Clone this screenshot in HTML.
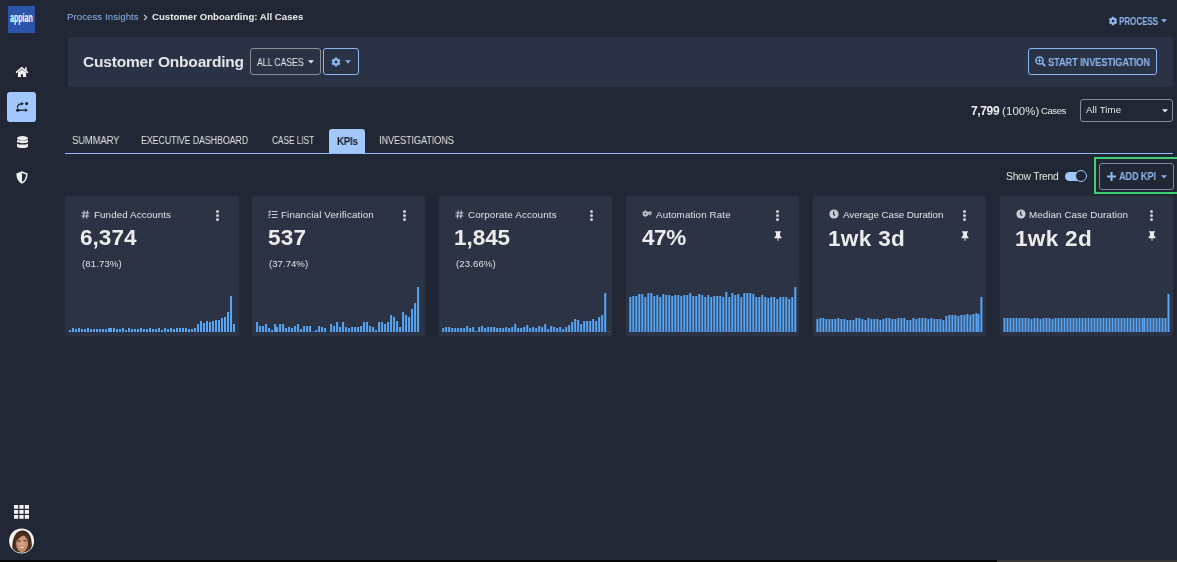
<!DOCTYPE html>
<html><head><meta charset="utf-8">
<style>
*{box-sizing:border-box;margin:0;padding:0}
html,body{width:1177px;height:562px;overflow:hidden;background:#212734;font-family:"Liberation Sans",sans-serif;color:#e8e8e8}
.abs{position:absolute}
.t{position:absolute;white-space:nowrap;line-height:1;will-change:transform}
#botbar{position:absolute;left:0;top:559.6px;width:997px;height:2.4px;background:#060709}
#botbar2{position:absolute;left:997px;top:559.6px;width:180px;height:2.4px;background:#383735}
/* sidebar */
.logo{position:absolute;left:8px;top:6px;width:27px;height:27px;background:#2c55a9}
.logo span{position:absolute;display:block;left:2px;top:5.5px;font-size:12px;color:#fff;font-weight:bold;line-height:12px;transform:scaleX(0.59);transform-origin:0 0;white-space:nowrap}
.navact{position:absolute;left:7px;top:92px;width:29px;height:30px;background:#a1c7fc;border-radius:3px}
/* header panel */
.panel{position:absolute;left:68px;top:37px;width:1105px;height:50px;background:#2a3345;border-radius:2px}
.btn{position:absolute;border:1px solid #8a8d93;border-radius:3px;background:transparent}
.btnb{border-color:#8db7f2}
/* tabs */
.tabline{position:absolute;left:65px;top:153px;width:1108px;height:1px;background:#93bdf6}
.tabact{position:absolute;left:329px;top:129px;width:36px;height:25px;background:#a2c7fb;border-radius:3px 3px 0 0}
.tab{position:absolute;top:136px;font-size:10px;color:#e3e3e3;line-height:1;white-space:nowrap}
/* cards */
.card{position:absolute;top:196px;width:173.6px;height:140px;background:#2b3345;border-radius:3px;box-shadow:0 0 2px rgba(60,70,90,0.5)}
.card .ct{position:absolute;left:16px;top:13px;height:10px;white-space:nowrap;font-size:10px;line-height:10px;color:#e2e2e4}
.card .ct svg{position:absolute;left:0;top:0}
.card .ct span{position:absolute;left:14px;top:1px}
.card .dots{position:absolute;right:19.8px;top:13.8px;width:3px;height:10px}
.card .dots i{display:block;width:3px;height:3px;border-radius:50%;background:#cfd1d5;margin-bottom:1px}
.card .pin{position:absolute;right:17.5px;top:35px}
.card .val{position:absolute;left:15.6px;top:30px;font-size:22px;line-height:22px;font-weight:bold;color:#ececec;white-space:nowrap}
.card .pct{position:absolute;left:18px;top:63px;font-size:10px;line-height:10px;color:#e0e0e0;white-space:nowrap}
.card .chart{position:absolute;left:0;top:0}
</style></head><body>
<!-- sidebar -->
<div class="logo"><span>appian</span></div>
<svg class="abs" style="left:12px;top:63px" width="20" height="18" viewBox="0 0 20 18"><g fill="#f0f0f0"><path d="M4.6 9.2 L9.9 4.9 L15.4 9.3" stroke="#f0f0f0" stroke-width="1.7" fill="none" stroke-linecap="round"/><rect x="13.2" y="4.2" width="1.5" height="3.2"/><path d="M5.9 14 V9.6 L9.9 6.6 L14.1 9.6 V14 H11 V11.3 H9 V14 Z"/></g></svg>
<div class="navact"></div>
<svg class="abs" style="left:12px;top:98px" width="20" height="18" viewBox="0 0 20 18"><g fill="#181d28"><circle cx="14.6" cy="5.5" r="1.5"/><circle cx="5.8" cy="12.2" r="1.6"/><path d="M9.2 4 L11.9 5.8 L9.2 7.6 Z"/><path d="M13.1 10.3 L15.9 12.2 L13.1 14.1 Z"/></g><g stroke="#181d28" stroke-width="1.3" fill="none"><path d="M5.4 9.7 C5.4 7 6.8 5.8 9.6 5.8"/><path d="M6 12.2 H13.6"/></g></svg>
<svg class="abs" style="left:17px;top:136px" width="11" height="13" viewBox="0 0 11 13"><g fill="#eeeeee"><ellipse cx="5.5" cy="2.2" rx="5.5" ry="2.2"/><path d="M0 3.4 C1 5 10 5 11 3.4 V6 C10 7.6 1 7.6 0 6Z"/><path d="M0 7.4 C1 9 10 9 11 7.4 V10.6 C10 12.6 1 12.6 0 10.6Z"/></g></svg>
<svg class="abs" style="left:16px;top:171px" width="12" height="13" viewBox="0 0 12 13"><path d="M6 0.3 L11.6 2.4 C11.6 7 10 10.6 6 12.7 C2 10.6 0.4 7 0.4 2.4 Z" fill="#eeeeee"/><path d="M6 2 L10 3.5 C9.9 7 8.6 9.6 6 11.1 Z" fill="#212734"/></svg>
<svg class="abs" style="left:14px;top:505px" width="15" height="14" viewBox="0 0 15 14"><g fill="#f2f2f2"><rect x="0" y="0" width="4.2" height="3.8"/><rect x="5.4" y="0" width="4.2" height="3.8"/><rect x="10.8" y="0" width="4.2" height="3.8"/><rect x="0" y="5" width="4.2" height="3.8"/><rect x="5.4" y="5" width="4.2" height="3.8"/><rect x="10.8" y="5" width="4.2" height="3.8"/><rect x="0" y="10" width="4.2" height="3.8"/><rect x="5.4" y="10" width="4.2" height="3.8"/><rect x="10.8" y="10" width="4.2" height="3.8"/></g></svg>
<svg class="abs" style="left:6px;top:526px" width="32" height="30" viewBox="0 0 599 562"><defs><clipPath id="av"><circle cx="292" cy="280" r="218"/></clipPath><radialGradient id="sk" cx="0.5" cy="0.45" r="0.6"><stop offset="0" stop-color="#dba585"/><stop offset="1" stop-color="#b98160"/></radialGradient></defs><circle cx="292" cy="280" r="234" fill="#f2f2f2"/><g clip-path="url(#av)"><rect width="599" height="562" fill="#f4f2ef"/><path d="M120 520 C110 380 120 250 170 170 C210 105 260 85 300 85 C370 85 430 120 460 200 C490 280 480 400 490 520 Z" fill="#3f2819"/><path d="M170 200 C200 120 380 110 430 190 C440 260 450 380 440 520 L380 520 C400 420 410 300 390 220 C330 180 250 200 200 260 C190 330 200 430 210 520 L160 520 C150 400 150 300 170 200Z" fill="#4f3220"/><ellipse cx="300" cy="330" rx="112" ry="160" fill="url(#sk)"/><path d="M190 250 C220 160 300 140 380 160 C340 170 260 190 200 280Z" fill="#3f2819"/><ellipse cx="245" cy="280" rx="38" ry="14" fill="#6a4536"/><ellipse cx="352" cy="278" rx="36" ry="14" fill="#6a4536"/><ellipse cx="296" cy="405" rx="52" ry="22" fill="#b8685a"/><ellipse cx="296" cy="402" rx="40" ry="13" fill="#f3e4de"/></g></svg>
<div id="botbar"></div><div id="botbar2"></div>

<!-- breadcrumb -->
<svg class="abs" style="left:143px;top:14px" width="5" height="7" viewBox="0 0 5 7"><path d="M1 0.8 L3.8 3.5 L1 6.2" stroke="#cfd2d6" stroke-width="1.1" fill="none"/></svg>
<!-- process -->
<svg class="abs" style="left:1107.5px;top:16.1px" width="10" height="10" viewBox="0 0 10 10"><path fill="#8db6ef" fill-rule="evenodd" d="M3.73 1.85 L3.96 0.83 L6.04 0.83 L6.27 1.85 L7.09 2.32 L8.09 2.01 L9.13 3.81 L8.37 4.53 L8.37 5.47 L9.13 6.19 L8.09 7.99 L7.09 7.68 L6.27 8.15 L6.04 9.17 L3.96 9.17 L3.73 8.15 L2.91 7.68 L1.91 7.99 L0.87 6.19 L1.63 5.47 L1.63 4.53 L0.87 3.81 L1.91 2.01 L2.91 2.32Z M6.30 5.00 A1.3 1.3 0 1 0 3.70 5.00 A1.3 1.3 0 1 0 6.30 5.00Z"/></svg>
<svg class="abs" style="left:1161px;top:19px" width="6" height="4" viewBox="0 0 6 4"><path d="M0 0.3 H6 L3 3.6Z" fill="#8db6ef"/></svg>

<!-- header panel -->
<div class="panel"></div>
<div class="btn" style="left:250px;top:48px;width:71px;height:27px"></div>
<svg class="abs" style="left:308px;top:60px" width="6" height="4" viewBox="0 0 6 4"><path d="M0 0.3 H6 L3 3.6Z" fill="#e6e6e6"/></svg>
<div class="btn btnb" style="left:323px;top:48px;width:36px;height:27px"></div>
<svg class="abs" style="left:331px;top:57px" width="10" height="10" viewBox="0 0 10 10"><path fill="#8db6ef" fill-rule="evenodd" d="M3.65 1.66 L3.89 0.54 L6.11 0.54 L6.35 1.66 L7.22 2.16 L8.31 1.80 L9.42 3.73 L8.56 4.50 L8.56 5.50 L9.42 6.27 L8.31 8.20 L7.22 7.84 L6.35 8.34 L6.11 9.46 L3.89 9.46 L3.65 8.34 L2.78 7.84 L1.69 8.20 L0.58 6.27 L1.44 5.50 L1.44 4.50 L0.58 3.73 L1.69 1.80 L2.78 2.16Z M6.40 5.00 A1.4 1.4 0 1 0 3.60 5.00 A1.4 1.4 0 1 0 6.40 5.00Z"/></svg>
<svg class="abs" style="left:344.5px;top:60px" width="6" height="4" viewBox="0 0 6 4"><path d="M0 0.3 H6 L3 3.6Z" fill="#8db6ef"/></svg>
<div class="btn btnb" style="left:1028px;top:48px;width:129px;height:27px"></div>
<svg class="abs" style="left:1035px;top:56px" width="11" height="11" viewBox="0 0 11 11"><circle cx="4.5" cy="4.5" r="3.6" stroke="#8db6ef" stroke-width="1.5" fill="none"/><path d="M7 7 L10.2 10.2" stroke="#8db6ef" stroke-width="1.8"/><path d="M4.5 2.6 V6.4 M2.6 4.5 H6.4" stroke="#8db6ef" stroke-width="1.1"/></svg>

<!-- cases -->
<div class="btn" style="left:1080px;top:99px;width:93px;height:23px;background:#212734"></div>
<svg class="abs" style="left:1162px;top:109px" width="6" height="4" viewBox="0 0 6 4"><path d="M0 0.3 H6 L3 3.6Z" fill="#e6e6e6"/></svg>

<!-- tabs -->
<div class="tabact"></div>
<div class="tabline"></div>

<!-- toolbar -->
<div class="abs" style="left:1065px;top:171.5px;width:20px;height:9px;border-radius:4.5px;background:#a1c7fc"></div>
<div class="abs" style="left:1075px;top:169.8px;width:12px;height:12px;border-radius:50%;background:#212734;border:1.6px solid #a1c7fc"></div>
<div class="abs" style="left:1094px;top:157px;width:90px;height:37px;border:2px solid #3fcf70"></div>
<div class="btn" style="left:1099px;top:163px;width:75px;height:27px;border-color:#7d8aa3;background:#212734"></div>
<svg class="abs" style="left:1107px;top:172px" width="9" height="9" viewBox="0 0 9 9"><path d="M4.5 0 V9 M0 4.5 H9" stroke="#8db6ef" stroke-width="2.1"/></svg>
<svg class="abs" style="left:1160.5px;top:175px" width="6" height="4" viewBox="0 0 6 4"><path d="M0 0.3 H6 L3 3.6Z" fill="#8db6ef"/></svg>

<div class="card" style="left:65.00px">
  <div class="ct"><svg class="ci" style="top:1px" width="9" height="9" viewBox="0 0 9 9"><g stroke="#c9ccd2" stroke-width="1.1" fill="none"><path d="M3.2 0.5 L2.4 8.5 M6.4 0.5 L5.6 8.5 M0.6 3 H8.4 M0.4 6 H8.2"/></g></svg></div>
  <div class="dots"><i></i><i></i><i></i></div>

  <svg class="chart" width="173.6" height="140" viewBox="0 0 173.6 140"><g fill="#58a6f3"><rect x="4.00" y="134" width="2" height="2"/><rect x="7.00" y="132" width="2" height="4"/><rect x="10.00" y="133" width="2" height="3"/><rect x="13.00" y="132" width="2" height="4"/><rect x="16.00" y="133" width="2" height="3"/><rect x="19.00" y="133" width="2" height="3"/><rect x="22.00" y="132" width="2" height="4"/><rect x="25.00" y="133" width="2" height="3"/><rect x="28.00" y="133" width="2" height="3"/><rect x="31.00" y="133" width="2" height="3"/><rect x="34.00" y="133" width="2" height="3"/><rect x="37.00" y="133" width="2" height="3"/><rect x="40.00" y="133" width="2" height="3"/><rect x="43.00" y="132" width="2" height="4"/><rect x="45.00" y="132" width="2" height="4"/><rect x="48.00" y="132" width="2" height="4"/><rect x="51.00" y="133" width="2" height="3"/><rect x="54.00" y="133" width="2" height="3"/><rect x="57.00" y="132" width="2" height="4"/><rect x="60.00" y="134" width="2" height="2"/><rect x="63.00" y="132" width="2" height="4"/><rect x="66.00" y="133" width="2" height="3"/><rect x="69.00" y="133" width="2" height="3"/><rect x="72.00" y="133" width="2" height="3"/><rect x="75.00" y="132" width="2" height="4"/><rect x="78.00" y="133" width="2" height="3"/><rect x="81.00" y="133" width="2" height="3"/><rect x="84.00" y="132" width="2" height="4"/><rect x="87.00" y="133" width="2" height="3"/><rect x="90.00" y="133" width="2" height="3"/><rect x="93.00" y="132" width="2" height="4"/><rect x="96.00" y="134" width="2" height="2"/><rect x="99.00" y="132" width="2" height="4"/><rect x="102.00" y="133" width="2" height="3"/><rect x="105.00" y="132" width="2" height="4"/><rect x="108.00" y="133" width="2" height="3"/><rect x="111.00" y="132" width="2" height="4"/><rect x="114.00" y="132" width="2" height="4"/><rect x="117.00" y="132" width="2" height="4"/><rect x="120.00" y="132" width="2" height="4"/><rect x="123.00" y="133" width="2" height="3"/><rect x="126.00" y="133" width="2" height="3"/><rect x="129.00" y="132" width="2" height="4"/><rect x="132.00" y="128" width="2" height="8"/><rect x="135.00" y="125" width="2" height="11"/><rect x="138.00" y="127" width="2" height="9"/><rect x="141.00" y="125" width="2" height="11"/><rect x="144.00" y="126" width="2" height="10"/><rect x="147.00" y="125" width="2" height="11"/><rect x="150.00" y="124" width="2" height="12"/><rect x="153.00" y="124" width="2" height="12"/><rect x="156.00" y="122" width="2" height="14"/><rect x="159.00" y="121" width="2" height="15"/><rect x="162.00" y="116" width="2" height="20"/><rect x="165.00" y="100" width="2" height="36"/><rect x="168.00" y="128" width="2" height="8"/></g></svg>
</div>
<div class="card" style="left:251.90px">
  <div class="ct"><svg class="ci" style="top:1px" width="10" height="9" viewBox="0 0 10 9"><g stroke="#c9ccd2" stroke-width="1.1" fill="none"><path d="M0.5 1.5 L1.3 2.3 L2.6 0.6 M0.5 4.5 L1.3 5.3 L2.6 3.6 M3.8 1.5 H9.5 M3.8 4.5 H9.5 M3.8 7.5 H9.5"/><rect x="0.6" y="6.9" width="1.4" height="1.2" fill="#c9ccd2" stroke="none"/></g></svg></div>
  <div class="dots"><i></i><i></i><i></i></div>

  <svg class="chart" width="173.6" height="140" viewBox="0 0 173.6 140"><g fill="#58a6f3"><rect x="4.10" y="126" width="2" height="10"/><rect x="7.10" y="130" width="2" height="6"/><rect x="10.10" y="130" width="2" height="6"/><rect x="13.10" y="128" width="2" height="8"/><rect x="16.10" y="132" width="2" height="4"/><rect x="19.10" y="134" width="2" height="2"/><rect x="22.10" y="128" width="2" height="8"/><rect x="24.10" y="131" width="2" height="5"/><rect x="27.10" y="128" width="2" height="8"/><rect x="30.10" y="128" width="2" height="8"/><rect x="33.10" y="132" width="2" height="4"/><rect x="36.10" y="131" width="2" height="5"/><rect x="39.10" y="132" width="2" height="4"/><rect x="42.10" y="130" width="2" height="6"/><rect x="45.10" y="128" width="2" height="8"/><rect x="48.10" y="133" width="2" height="3"/><rect x="51.10" y="130" width="2" height="6"/><rect x="54.10" y="130" width="2" height="6"/><rect x="57.10" y="130" width="2" height="6"/><rect x="60.10" y="135" width="3" height="1" opacity="0.35"/><rect x="63.10" y="134" width="2" height="2"/><rect x="66.10" y="130" width="2" height="6"/><rect x="69.10" y="131" width="2" height="5"/><rect x="72.10" y="132" width="2" height="4"/><rect x="78.10" y="128" width="2" height="8"/><rect x="81.10" y="130" width="2" height="6"/><rect x="84.10" y="126" width="2" height="10"/><rect x="87.10" y="131" width="2" height="5"/><rect x="90.10" y="126" width="2" height="10"/><rect x="93.10" y="131" width="2" height="5"/><rect x="96.10" y="132" width="2" height="4"/><rect x="99.10" y="131" width="2" height="5"/><rect x="102.10" y="131" width="2" height="5"/><rect x="105.10" y="131" width="2" height="5"/><rect x="108.10" y="130" width="2" height="6"/><rect x="111.10" y="126" width="2" height="10"/><rect x="114.10" y="126" width="2" height="10"/><rect x="117.10" y="130" width="2" height="6"/><rect x="120.10" y="131" width="2" height="5"/><rect x="123.10" y="134" width="2" height="2"/><rect x="126.10" y="126" width="2" height="10"/><rect x="129.10" y="126" width="2" height="10"/><rect x="132.10" y="128" width="2" height="8"/><rect x="135.10" y="126" width="2" height="10"/><rect x="138.10" y="119" width="2" height="17"/><rect x="141.10" y="121" width="2" height="15"/><rect x="144.10" y="125" width="2" height="11"/><rect x="147.10" y="131" width="2" height="5"/><rect x="150.10" y="116" width="2" height="20"/><rect x="153.10" y="119" width="2" height="17"/><rect x="156.10" y="121" width="2" height="15"/><rect x="159.10" y="113" width="2" height="23"/><rect x="162.10" y="107" width="2" height="29"/><rect x="165.10" y="91" width="2" height="45"/></g></svg>
</div>
<div class="card" style="left:438.80px">
  <div class="ct"><svg class="ci" style="top:1px" width="9" height="9" viewBox="0 0 9 9"><g stroke="#c9ccd2" stroke-width="1.1" fill="none"><path d="M3.2 0.5 L2.4 8.5 M6.4 0.5 L5.6 8.5 M0.6 3 H8.4 M0.4 6 H8.2"/></g></svg></div>
  <div class="dots"><i></i><i></i><i></i></div>

  <svg class="chart" width="173.6" height="140" viewBox="0 0 173.6 140"><g fill="#58a6f3"><rect x="3.20" y="132" width="2" height="4"/><rect x="6.20" y="131" width="2" height="5"/><rect x="9.20" y="131" width="2" height="5"/><rect x="12.20" y="132" width="2" height="4"/><rect x="15.20" y="132" width="2" height="4"/><rect x="18.20" y="132" width="2" height="4"/><rect x="21.20" y="132" width="2" height="4"/><rect x="24.20" y="132" width="2" height="4"/><rect x="27.20" y="130" width="2" height="6"/><rect x="30.20" y="132" width="2" height="4"/><rect x="33.20" y="131" width="2" height="5"/><rect x="36.20" y="135" width="2" height="1"/><rect x="39.20" y="131" width="2" height="5"/><rect x="42.20" y="130" width="2" height="6"/><rect x="45.20" y="132" width="2" height="4"/><rect x="48.20" y="131" width="2" height="5"/><rect x="51.20" y="131" width="2" height="5"/><rect x="54.20" y="131" width="2" height="5"/><rect x="57.20" y="132" width="2" height="4"/><rect x="60.20" y="132" width="2" height="4"/><rect x="63.20" y="132" width="2" height="4"/><rect x="66.20" y="131" width="2" height="5"/><rect x="69.20" y="132" width="2" height="4"/><rect x="72.20" y="131" width="2" height="5"/><rect x="75.20" y="128" width="2" height="8"/><rect x="78.20" y="132" width="2" height="4"/><rect x="81.20" y="132" width="2" height="4"/><rect x="84.20" y="131" width="2" height="5"/><rect x="87.20" y="129" width="2" height="7"/><rect x="90.20" y="132" width="2" height="4"/><rect x="93.20" y="131" width="2" height="5"/><rect x="96.20" y="132" width="2" height="4"/><rect x="99.20" y="130" width="2" height="6"/><rect x="102.20" y="131" width="2" height="5"/><rect x="105.20" y="128" width="2" height="8"/><rect x="108.20" y="133" width="2" height="3"/><rect x="111.20" y="130" width="2" height="6"/><rect x="114.20" y="131" width="2" height="5"/><rect x="117.20" y="132" width="2" height="4"/><rect x="120.20" y="131" width="2" height="5"/><rect x="123.20" y="133" width="2" height="3"/><rect x="126.20" y="131" width="2" height="5"/><rect x="129.20" y="129" width="2" height="7"/><rect x="132.20" y="126" width="2" height="10"/><rect x="135.20" y="123" width="2" height="13"/><rect x="138.20" y="124" width="2" height="12"/><rect x="141.20" y="128" width="2" height="8"/><rect x="144.20" y="125" width="2" height="11"/><rect x="147.20" y="125" width="2" height="11"/><rect x="150.20" y="125" width="2" height="11"/><rect x="153.20" y="123" width="2" height="13"/><rect x="156.20" y="125" width="2" height="11"/><rect x="159.20" y="121" width="2" height="15"/><rect x="162.20" y="119" width="2" height="17"/><rect x="165.20" y="97" width="2" height="39"/><rect x="168.20" y="135" width="3" height="1" opacity="0.35"/></g></svg>
</div>
<div class="card" style="left:625.70px">
  <div class="ct"><svg class="ci" style="top:0px" width="10" height="9" viewBox="0 0 11 10"><path fill="#c9ccd2" fill-rule="evenodd" d="M2.60 2.73 L2.85 1.80 L4.55 1.80 L4.80 2.73 L5.29 3.02 L6.22 2.77 L7.06 4.24 L6.39 4.92 L6.39 5.48 L7.06 6.16 L6.22 7.63 L5.29 7.38 L4.80 7.67 L4.55 8.60 L2.85 8.60 L2.60 7.67 L2.11 7.38 L1.18 7.63 L0.34 6.16 L1.01 5.48 L1.01 4.92 L0.34 4.24 L1.18 2.77 L2.11 3.02Z M4.70 5.20 A1.0 1.0 0 1 0 2.70 5.20 A1.0 1.0 0 1 0 4.70 5.20Z"/><path fill="#c9ccd2" fill-rule="evenodd" d="M7.85 3.07 L8.00 2.38 L9.20 2.38 L9.35 3.07 L9.55 3.19 L10.23 2.97 L10.82 4.00 L10.30 4.48 L10.30 4.72 L10.82 5.20 L10.23 6.23 L9.55 6.01 L9.35 6.13 L9.20 6.82 L8.00 6.82 L7.85 6.13 L7.65 6.01 L6.97 6.23 L6.38 5.20 L6.90 4.72 L6.90 4.48 L6.38 4.00 L6.97 2.97 L7.65 3.19Z M9.35 4.60 A0.75 0.75 0 1 0 7.85 4.60 A0.75 0.75 0 1 0 9.35 4.60Z"/></svg></div>
  <div class="dots"><i></i><i></i><i></i></div><svg class="pin" width="8" height="10" viewBox="0 0 8 10"><path d="M1 0.3 H7 V1.2 L6 1.8 V4.5 L7.6 6.6 V7.2 H4.5 V9.8 H3.5 V7.2 H0.4 V6.6 L2 4.5 V1.8 L1 1.2 Z" fill="#e9e9ea"/></svg>

  <svg class="chart" width="173.6" height="140" viewBox="0 0 173.6 140"><g fill="#58a6f3"><rect x="3.30" y="101" width="2" height="35"/><rect x="6.30" y="100" width="2" height="36"/><rect x="9.30" y="100" width="2" height="36"/><rect x="12.30" y="98" width="2" height="38"/><rect x="15.30" y="98" width="2" height="38"/><rect x="18.30" y="101" width="2" height="35"/><rect x="21.30" y="97" width="2" height="39"/><rect x="24.30" y="97" width="2" height="39"/><rect x="27.30" y="100" width="2" height="36"/><rect x="30.30" y="99" width="2" height="37"/><rect x="33.30" y="101" width="2" height="35"/><rect x="36.30" y="98" width="2" height="38"/><rect x="39.30" y="99" width="2" height="37"/><rect x="42.30" y="99" width="2" height="37"/><rect x="45.30" y="100" width="2" height="36"/><rect x="48.30" y="99" width="2" height="37"/><rect x="51.30" y="99" width="2" height="37"/><rect x="54.30" y="100" width="2" height="36"/><rect x="57.30" y="99" width="2" height="37"/><rect x="60.30" y="99" width="2" height="37"/><rect x="63.30" y="97" width="2" height="39"/><rect x="66.30" y="100" width="2" height="36"/><rect x="69.30" y="100" width="2" height="36"/><rect x="72.30" y="98" width="2" height="38"/><rect x="75.30" y="99" width="2" height="37"/><rect x="78.30" y="101" width="2" height="35"/><rect x="81.30" y="99" width="2" height="37"/><rect x="84.30" y="101" width="2" height="35"/><rect x="87.30" y="100" width="2" height="36"/><rect x="90.30" y="100" width="2" height="36"/><rect x="93.30" y="100" width="2" height="36"/><rect x="96.30" y="101" width="2" height="35"/><rect x="99.30" y="96" width="2" height="40"/><rect x="102.30" y="101" width="2" height="35"/><rect x="105.30" y="97" width="2" height="39"/><rect x="108.30" y="99" width="2" height="37"/><rect x="111.30" y="98" width="2" height="38"/><rect x="114.30" y="101" width="2" height="35"/><rect x="117.30" y="97" width="2" height="39"/><rect x="120.30" y="97" width="2" height="39"/><rect x="123.30" y="97" width="2" height="39"/><rect x="126.30" y="98" width="2" height="38"/><rect x="129.30" y="101" width="2" height="35"/><rect x="132.30" y="101" width="2" height="35"/><rect x="135.30" y="99" width="2" height="37"/><rect x="138.30" y="101" width="2" height="35"/><rect x="141.30" y="102" width="2" height="34"/><rect x="144.30" y="101" width="2" height="35"/><rect x="147.30" y="101" width="2" height="35"/><rect x="150.30" y="103" width="2" height="33"/><rect x="153.30" y="101" width="2" height="35"/><rect x="156.30" y="101" width="2" height="35"/><rect x="159.30" y="101" width="2" height="35"/><rect x="162.30" y="103" width="2" height="33"/><rect x="165.30" y="101" width="2" height="35"/><rect x="168.30" y="91" width="2" height="45"/></g></svg>
</div>
<div class="card" style="left:812.60px">
  <div class="ct"><svg class="ci" width="10" height="10" viewBox="0 0 10 10"><circle cx="5" cy="5" r="4.6" fill="#c9ccd2"/><path d="M4.6 2.2 V5.4 L6.2 6.6" stroke="#2b3344" stroke-width="1.2" fill="none"/></svg></div>
  <div class="dots"><i></i><i></i><i></i></div><svg class="pin" width="8" height="10" viewBox="0 0 8 10"><path d="M1 0.3 H7 V1.2 L6 1.8 V4.5 L7.6 6.6 V7.2 H4.5 V9.8 H3.5 V7.2 H0.4 V6.6 L2 4.5 V1.8 L1 1.2 Z" fill="#e9e9ea"/></svg>

  <svg class="chart" width="173.6" height="140" viewBox="0 0 173.6 140"><g fill="#58a6f3"><rect x="3.40" y="123" width="2" height="13"/><rect x="6.40" y="122" width="2" height="14"/><rect x="9.40" y="122" width="2" height="14"/><rect x="12.40" y="123" width="2" height="13"/><rect x="15.40" y="123" width="2" height="13"/><rect x="18.40" y="123" width="2" height="13"/><rect x="21.40" y="123" width="2" height="13"/><rect x="24.40" y="122" width="2" height="14"/><rect x="27.40" y="123" width="2" height="13"/><rect x="30.40" y="123" width="2" height="13"/><rect x="33.40" y="124" width="2" height="12"/><rect x="36.40" y="124" width="2" height="12"/><rect x="39.40" y="124" width="2" height="12"/><rect x="42.40" y="122" width="2" height="14"/><rect x="45.40" y="122" width="2" height="14"/><rect x="48.40" y="123" width="2" height="13"/><rect x="51.40" y="124" width="2" height="12"/><rect x="54.40" y="122" width="2" height="14"/><rect x="57.40" y="123" width="2" height="13"/><rect x="60.40" y="123" width="2" height="13"/><rect x="63.40" y="123" width="2" height="13"/><rect x="66.40" y="124" width="2" height="12"/><rect x="69.40" y="123" width="2" height="13"/><rect x="72.40" y="122" width="2" height="14"/><rect x="75.40" y="122" width="2" height="14"/><rect x="78.40" y="123" width="2" height="13"/><rect x="81.40" y="123" width="2" height="13"/><rect x="84.40" y="122" width="2" height="14"/><rect x="87.40" y="122" width="2" height="14"/><rect x="90.40" y="122" width="2" height="14"/><rect x="93.40" y="124" width="2" height="12"/><rect x="96.40" y="124" width="2" height="12"/><rect x="99.40" y="122" width="2" height="14"/><rect x="102.40" y="123" width="2" height="13"/><rect x="105.40" y="122" width="2" height="14"/><rect x="108.40" y="122" width="2" height="14"/><rect x="111.40" y="122" width="2" height="14"/><rect x="114.40" y="123" width="2" height="13"/><rect x="117.40" y="122" width="2" height="14"/><rect x="120.40" y="123" width="2" height="13"/><rect x="123.40" y="123" width="2" height="13"/><rect x="126.40" y="123" width="2" height="13"/><rect x="129.40" y="124" width="2" height="12"/><rect x="132.40" y="120" width="2" height="16"/><rect x="135.40" y="119" width="2" height="17"/><rect x="138.40" y="119" width="2" height="17"/><rect x="141.40" y="119" width="2" height="17"/><rect x="144.40" y="120" width="2" height="16"/><rect x="147.40" y="119" width="2" height="17"/><rect x="150.40" y="119" width="2" height="17"/><rect x="153.40" y="118" width="2" height="18"/><rect x="156.40" y="119" width="2" height="17"/><rect x="159.40" y="118" width="2" height="18"/><rect x="162.40" y="117" width="2" height="19"/><rect x="164.40" y="118" width="2" height="18"/><rect x="167.40" y="101" width="2" height="35"/></g></svg>
</div>
<div class="card" style="left:999.50px">
  <div class="ct"><svg class="ci" width="10" height="10" viewBox="0 0 10 10"><circle cx="5" cy="5" r="4.6" fill="#c9ccd2"/><path d="M4.6 2.2 V5.4 L6.2 6.6" stroke="#2b3344" stroke-width="1.2" fill="none"/></svg></div>
  <div class="dots"><i></i><i></i><i></i></div><svg class="pin" width="8" height="10" viewBox="0 0 8 10"><path d="M1 0.3 H7 V1.2 L6 1.8 V4.5 L7.6 6.6 V7.2 H4.5 V9.8 H3.5 V7.2 H0.4 V6.6 L2 4.5 V1.8 L1 1.2 Z" fill="#e9e9ea"/></svg>

  <svg class="chart" width="173.6" height="140" viewBox="0 0 173.6 140"><g fill="#58a6f3"><rect x="3.50" y="122" width="2" height="14"/><rect x="6.50" y="122" width="2" height="14"/><rect x="9.50" y="122" width="2" height="14"/><rect x="12.50" y="122" width="2" height="14"/><rect x="15.50" y="122" width="2" height="14"/><rect x="18.50" y="122" width="2" height="14"/><rect x="21.50" y="122" width="2" height="14"/><rect x="24.50" y="122" width="2" height="14"/><rect x="27.50" y="122" width="2" height="14"/><rect x="30.50" y="123" width="2" height="13"/><rect x="33.50" y="122" width="2" height="14"/><rect x="36.50" y="122" width="2" height="14"/><rect x="39.50" y="123" width="2" height="13"/><rect x="42.50" y="122" width="2" height="14"/><rect x="45.50" y="122" width="2" height="14"/><rect x="48.50" y="122" width="2" height="14"/><rect x="51.50" y="123" width="2" height="13"/><rect x="54.50" y="122" width="2" height="14"/><rect x="57.50" y="122" width="2" height="14"/><rect x="60.50" y="122" width="2" height="14"/><rect x="63.50" y="122" width="2" height="14"/><rect x="66.50" y="122" width="2" height="14"/><rect x="69.50" y="122" width="2" height="14"/><rect x="72.50" y="122" width="2" height="14"/><rect x="75.50" y="122" width="2" height="14"/><rect x="78.50" y="122" width="2" height="14"/><rect x="81.50" y="122" width="2" height="14"/><rect x="84.50" y="122" width="2" height="14"/><rect x="87.50" y="122" width="2" height="14"/><rect x="90.50" y="122" width="2" height="14"/><rect x="93.50" y="122" width="2" height="14"/><rect x="96.50" y="122" width="2" height="14"/><rect x="99.50" y="122" width="2" height="14"/><rect x="102.50" y="122" width="2" height="14"/><rect x="105.50" y="122" width="2" height="14"/><rect x="108.50" y="122" width="2" height="14"/><rect x="111.50" y="122" width="2" height="14"/><rect x="114.50" y="122" width="2" height="14"/><rect x="117.50" y="122" width="2" height="14"/><rect x="120.50" y="122" width="2" height="14"/><rect x="123.50" y="122" width="2" height="14"/><rect x="126.50" y="122" width="2" height="14"/><rect x="129.50" y="122" width="2" height="14"/><rect x="132.50" y="122" width="2" height="14"/><rect x="135.50" y="122" width="2" height="14"/><rect x="138.50" y="122" width="2" height="14"/><rect x="141.50" y="122" width="2" height="14"/><rect x="143.50" y="122" width="2" height="14"/><rect x="146.50" y="122" width="2" height="14"/><rect x="149.50" y="122" width="2" height="14"/><rect x="152.50" y="122" width="2" height="14"/><rect x="155.50" y="122" width="2" height="14"/><rect x="158.50" y="122" width="2" height="14"/><rect x="161.50" y="122" width="2" height="14"/><rect x="164.50" y="122" width="2" height="14"/><rect x="167.50" y="98" width="2" height="38"/></g></svg>
</div>
<div class="t" id="bc1" style="left:67.02px;top:12.29px;font-size:9.6px;font-weight:400;color:#8db6ef;letter-spacing:0.084px">Process Insights</div>
<div class="t" id="bc2" style="left:151.98px;top:12.29px;font-size:9.6px;font-weight:700;color:#ededed;letter-spacing:0.025px">Customer Onboarding: All Cases</div>
<div class="t" id="proc" style="left:1119.03px;top:17.30px;font-size:10.0px;font-weight:700;color:#8db6ef;letter-spacing:-0.150px;transform:scaleX(0.8162);transform-origin:0 0">PROCESS</div>
<div class="t" id="h1" style="left:82.99px;top:54.06px;font-size:15.5px;font-weight:700;color:#e4e5e8;letter-spacing:-0.190px">Customer Onboarding</div>
<div class="t" id="allc" style="left:257.40px;top:58.30px;font-size:10.0px;font-weight:400;color:#e6e6e6;letter-spacing:-0.150px;transform:scaleX(0.8820);transform-origin:0 0">ALL CASES</div>
<div class="t" id="si" style="left:1047.50px;top:58.30px;font-size:10.0px;font-weight:700;color:#8db6ef;letter-spacing:-0.150px;transform:scaleX(0.9300);transform-origin:0 0">START INVESTIGATION</div>
<div class="t" id="n7799" style="left:970.50px;top:104.88px;font-size:12.0px;font-weight:700;color:#ececec;letter-spacing:-0.360px">7,799</div>
<div class="t" id="p100" style="left:1001.94px;top:106.26px;font-size:11.4px;font-weight:400;color:#e6e6e6;letter-spacing:0.126px">(100%)</div>
<div class="t" id="cases" style="left:1040.50px;top:106.17px;font-size:9.6px;font-weight:400;color:#e6e6e6;letter-spacing:-0.450px">Cases</div>
<div class="t" id="alltime" style="left:1085.98px;top:105.27px;font-size:9.6px;font-weight:400;color:#ececec;letter-spacing:0.129px">All Time</div>
<div class="t" id="tab1" style="left:71.75px;top:136.32px;font-size:10.0px;font-weight:400;color:#e3e3e3;letter-spacing:-0.150px;transform:scaleX(0.9489);transform-origin:0 0">SUMMARY</div>
<div class="t" id="tab2" style="left:141.00px;top:136.32px;font-size:10.0px;font-weight:400;color:#e3e3e3;letter-spacing:-0.150px;transform:scaleX(0.8924);transform-origin:0 0">EXECUTIVE DASHBOARD</div>
<div class="t" id="tab3" style="left:271.85px;top:136.32px;font-size:10.0px;font-weight:400;color:#e3e3e3;letter-spacing:-0.150px;transform:scaleX(0.8466);transform-origin:0 0">CASE LIST</div>
<div class="t" id="tab4" style="left:336.50px;top:136.72px;font-size:10.0px;font-weight:700;color:#16191f;letter-spacing:-0.150px;transform:scaleX(0.9629);transform-origin:0 0">KPIs</div>
<div class="t" id="tab5" style="left:379.20px;top:136.32px;font-size:10.0px;font-weight:400;color:#e3e3e3;letter-spacing:-0.150px;transform:scaleX(0.9227);transform-origin:0 0">INVESTIGATIONS</div>
<div class="t" id="trend" style="left:1005.59px;top:171.51px;font-size:10.3px;font-weight:400;color:#e3e3e3;letter-spacing:-0.240px">Show Trend</div>
<div class="t" id="addkpi" style="left:1119.25px;top:172.15px;font-size:10.0px;font-weight:700;color:#8db6ef;letter-spacing:-0.150px;transform:scaleX(0.9178);transform-origin:0 0">ADD KPI</div>
<div class="t" id="t1" style="left:94.02px;top:210.07px;font-size:9.8px;font-weight:400;color:#e2e2e4;letter-spacing:0.090px">Funded Accounts</div>
<div class="t" id="t2" style="left:280.56px;top:210.07px;font-size:9.8px;font-weight:400;color:#e2e2e4;letter-spacing:0.137px">Financial Verification</div>
<div class="t" id="t3" style="left:467.92px;top:210.07px;font-size:9.8px;font-weight:400;color:#e2e2e4;letter-spacing:0.148px">Corporate Accounts</div>
<div class="t" id="t4" style="left:655.90px;top:210.07px;font-size:9.8px;font-weight:400;color:#e2e2e4;letter-spacing:0.116px">Automation Rate</div>
<div class="t" id="t5" style="left:842.66px;top:210.07px;font-size:9.8px;font-weight:400;color:#e2e2e4;letter-spacing:-0.063px">Average Case Duration</div>
<div class="t" id="t6" style="left:1028.56px;top:210.07px;font-size:9.8px;font-weight:400;color:#e2e2e4;letter-spacing:0.076px">Median Case Duration</div>
<div class="t" id="v1" style="left:79.56px;top:226.99px;font-size:22.5px;font-weight:700;color:#ececec;letter-spacing:0.045px">6,374</div>
<div class="t" id="v2" style="left:267.52px;top:226.99px;font-size:22.5px;font-weight:700;color:#ececec;letter-spacing:0.180px">537</div>
<div class="t" id="v3" style="left:454.02px;top:226.99px;font-size:22.5px;font-weight:700;color:#ececec;letter-spacing:-0.045px">1,845</div>
<div class="t" id="v4" style="left:641.94px;top:226.99px;font-size:22.5px;font-weight:700;color:#ececec;letter-spacing:-0.450px">47%</div>
<div class="t" id="v5" style="left:828.10px;top:227.89px;font-size:22.5px;font-weight:700;color:#ececec;letter-spacing:0.360px">1wk 3d</div>
<div class="t" id="v6" style="left:1015.10px;top:227.89px;font-size:22.5px;font-weight:700;color:#ececec;letter-spacing:0.324px">1wk 2d</div>
<div class="t" id="p1" style="left:81.60px;top:259.27px;font-size:9.6px;font-weight:400;color:#e0e0e0;letter-spacing:0.103px">(81.73%)</div>
<div class="t" id="p2" style="left:269.06px;top:259.27px;font-size:9.6px;font-weight:400;color:#e0e0e0;letter-spacing:0.026px">(37.74%)</div>
<div class="t" id="p3" style="left:455.58px;top:259.27px;font-size:9.6px;font-weight:400;color:#e0e0e0;letter-spacing:0.103px">(23.66%)</div>
</body></html>
